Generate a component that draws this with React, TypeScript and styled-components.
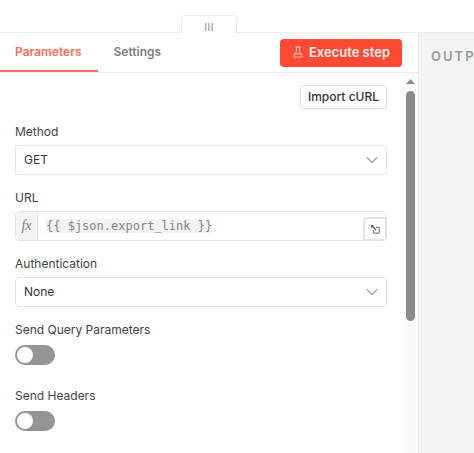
import React, { useState } from "react";
import styled, { createGlobalStyle } from "styled-components";

const accent = "#ff6f5c";
const line = "#e4e4e4";
const text = "#444444";

const GlobalStyle = createGlobalStyle`
  *, *::before, *::after { box-sizing: border-box; }
  body {
    margin: 0;
    background: #fefefe;
    color: ${text};
    font-family: Inter, "Liberation Sans", sans-serif;
    font-size: 13px;
  }
  button, input, select { font: inherit; color: inherit; margin: 0; }
`;

const Page = styled.div`
  display: flex;
  min-height: 100vh;
`;

const NodePane = styled.main`
  flex: 1;
  min-width: 0;
  display: flex;
  flex-direction: column;
`;

const TopStrip = styled.div`
  height: 33px;
  border-bottom: 1px solid #ebebeb;
  display: flex;
  justify-content: center;
  align-items: flex-end;
`;

const DragHandle = styled.button`
  width: 56px;
  height: 18px;
  margin-bottom: -1px;
  padding: 5px 0 0;
  border: 1px solid #ebebeb;
  border-bottom: 0;
  border-radius: 4px 4px 0 0;
  background: #ffffff;
  display: flex;
  justify-content: center;
  align-items: center;
  cursor: ew-resize;
`;

const Panel = styled.section`
  flex: 1;
  display: flex;
  flex-direction: column;
`;

const Header = styled.header`
  height: 40px;
  padding-right: 16px;
  border-bottom: 1px solid #ebebeb;
  display: flex;
  justify-content: space-between;
  align-items: center;
`;

const Tabs = styled.div`
  display: flex;
  align-self: stretch;
  gap: 1px;
`;

const Tab = styled.button<{ $active: boolean }>`
  height: 39px;
  padding: 0 16px 0 15px;
  border: 0;
  border-bottom: 2px solid ${(p) => (p.$active ? accent : "transparent")};
  background: none;
  color: ${(p) => (p.$active ? accent : "#7e7e7e")};
  font-weight: 600;
  font-size: 12px;
  cursor: pointer;
`;

const ExecuteButton = styled.button`
  height: 28px;
  padding: 0 12px 1px 13px;
  border: 0;
  border-radius: 4px;
  background: #ff4a33;
  color: #fff1ef;
  font-weight: 600;
  display: flex;
  align-items: center;
  gap: 6px;
  white-space: nowrap;
  cursor: pointer;
`;

const Body = styled.div`
  flex: 1;
  display: flex;
`;

const Form = styled.form`
  flex: 1;
  min-width: 0;
  padding: 12px 16px 16px 15px;
  display: flex;
  flex-direction: column;
  gap: 15px;
`;

const ImportButton = styled.button`
  align-self: flex-end;
  height: 24px;
  padding: 0 7px 1px;
  border: 1px solid ${line};
  border-radius: 4px;
  background: #ffffff;
  color: #333333;
  font-size: 12px;
  font-weight: 500;
  box-shadow: 0 1px 2px rgba(0, 0, 0, 0.05);
  cursor: pointer;
`;

const Field = styled.div<{ $switch?: boolean }>`
  display: grid;
  grid-template-rows: 16px ${(p) => (p.$switch ? "28px" : "30px")};
  row-gap: ${(p) => (p.$switch ? "7px" : "5px")};
`;

const Label = styled.label`
  justify-self: start;
  font-size: 12px;
  line-height: 16px;
`;

const SelectBox = styled.div`
  position: relative;
  display: grid;

  svg {
    position: absolute;
    right: 9px;
    top: 11px;
    pointer-events: none;
  }
`;

const Select = styled.select`
  appearance: none;
  width: 100%;
  height: 30px;
  padding: 0 32px 1px 8px;
  border: 1px solid ${line};
  border-radius: 4px;
  background: #ffffff;
  color: #383838;
  font-size: 12px;
`;

const ExpressionBox = styled.div`
  position: relative;
  display: flex;
  align-items: center;
  border: 1px solid ${line};
  border-radius: 4px;
  background: #ffffff;
  overflow: hidden;
`;

const FxBadge = styled.span`
  align-self: stretch;
  width: 22px;
  border-right: 1px solid ${line};
  background: #f4f4f4;
  color: #777c85;
  font: italic 14px/27px "Liberation Serif", serif;
  text-align: center;
`;

const ExpressionInput = styled.input`
  width: 23ch;
  height: 14px;
  margin-left: 8px;
  padding: 0;
  border: 0;
  box-sizing: content-box;
  background: #f3f3f3;
  color: #858585;
  && { font: 12px/14px "DejaVu Sans Mono", monospace; }
`;

const ExpandButton = styled.button`
  position: absolute;
  right: -1px;
  bottom: -1px;
  width: 24px;
  height: 24px;
  padding: 0;
  border: 2px solid ${line};
  border-radius: 4px 0 0 0;
  background: #ffffff;
  display: flex;
  justify-content: center;
  align-items: center;
  cursor: pointer;
`;

const Switch = styled.input`
  appearance: none;
  width: 40px;
  height: 20px;
  padding: 2px;
  border-radius: 10px;
  background: #949494;
  cursor: pointer;

  &::before {
    content: "";
    display: block;
    width: 16px;
    height: 16px;
    border-radius: 50%;
    background: #ffffff;
  }
  &:checked { background: ${accent}; }
  &:checked::before { margin-left: auto; }
`;

const ScrollTrack = styled.div`
  width: 15px;
  padding-top: 6px;
  background: #fbfbfb;
  display: flex;
  flex-direction: column;
  align-items: center;
  gap: 7px;
`;

const ScrollThumb = styled.div`
  width: 9px;
  height: 230px;
  border-radius: 5px;
  background: #8b8b8b;
`;

const OutputPane = styled.aside`
  flex: 0 0 56px;
  display: flex;
  flex-direction: column;
  overflow: hidden;
`;

const OutputSpacer = styled.div`
  height: 33px;
  border-bottom: 1px solid #ebebeb;
`;

const OutputBody = styled.div`
  flex: 1;
  padding: 14px 0 0 12px;
  background: #f4f4f4;
  border-left: 1px solid #e8e8e8;
`;

const OutputTitle = styled.h2`
  margin: 0;
  color: #999999;
  font-size: 13px;
  line-height: 18px;
  font-weight: 600;
  letter-spacing: 2px;
`;

const Chevron = () => (
  <svg width="12" height="8" viewBox="0 0 12 8" fill="none" stroke="#9a9a9a" strokeWidth="1.1" aria-hidden="true">
    <path d="M1 1.5 6 6.5 11 1.5" />
  </svg>
);

const Flask = () => (
  <svg width="10" height="12" viewBox="0 0 10 12" fill="none" stroke="#ffd0c9" strokeWidth="1" strokeLinejoin="round" strokeLinecap="round" aria-hidden="true">
    <path d="M2.900 1h4.200M3.500 1v4L.9 9.600c-.4.800 0 1.600.8 1.600h6.600c.8 0 1.200-.8.8-1.600L6.500 5V1M2.500 7.800h5" />
  </svg>
);

const Grip = () => (
  <svg width="8" height="8" viewBox="0 0 8 8" fill="#b0b0b0" aria-hidden="true">
    <path d="M0 0h1.500v8H0zM3.200 0h1.500v8H3.200zM6.500 0H8v8H6.500z" />
  </svg>
);

const Expand = () => (
  <svg width="9" height="9" viewBox="0 0 9 9" fill="none" stroke="#808080" strokeWidth="1.2" aria-hidden="true">
    <path d="M5 2.400H7.500Q8.200 2.400 8.200 3.100V7.500Q8.200 8.200 7.500 8.200H3.100Q2.400 8.200 2.400 7.500V5" />
    <path d="M1 1 5 5" stroke="#555555" />
    <path d="M0 0h3L0 3z" fill="#555555" stroke="none" />
  </svg>
);

const ArrowUp = () => (
  <svg width="9" height="5" viewBox="0 0 9 5" fill="#8b8b8b" aria-hidden="true">
    <path d="M4.500 0 9 5H0z" />
  </svg>
);

function SelectField({ id, label, options }: { id: string; label: string; options: string[] }) {
  return (
    <Field>
      <Label htmlFor={id}>{label}</Label>
      <SelectBox>
        <Select id={id} defaultValue={options[0]}>
          {options.map((o) => (
            <option key={o}>{o}</option>
          ))}
        </Select>
        <Chevron />
      </SelectBox>
    </Field>
  );
}

function SwitchField({ id, label }: { id: string; label: string }) {
  return (
    <Field $switch>
      <Label htmlFor={id}>{label}</Label>
      <Switch id={id} type="checkbox" role="switch" />
    </Field>
  );
}

export default function App() {
  const [tab, setTab] = useState("Parameters");
  const [url, setUrl] = useState("{{ $json.export_link }}");

  return (
    <>
      <GlobalStyle />
      <Page>
        <NodePane>
          <TopStrip>
            <DragHandle type="button" aria-label="Resize panel">
              <Grip />
            </DragHandle>
          </TopStrip>
          <Panel>
            <Header>
              <Tabs role="tablist">
                {["Parameters", "Settings"].map((name) => (
                  <Tab key={name} type="button" role="tab" aria-selected={tab === name} $active={tab === name} onClick={() => setTab(name)}>
                    {name}
                  </Tab>
                ))}
              </Tabs>
              <ExecuteButton type="button">
                <Flask />
                Execute step
              </ExecuteButton>
            </Header>
            <Body>
              <Form>
                <ImportButton type="button">Import cURL</ImportButton>
                <SelectField id="method" label="Method" options={["GET", "POST", "PUT", "DELETE"]} />
                <Field>
                  <Label htmlFor="url">URL</Label>
                  <ExpressionBox>
                    <FxBadge>fx</FxBadge>
                    <ExpressionInput id="url" spellCheck={false} value={url} onChange={(e) => setUrl(e.target.value)} />
                    <ExpandButton type="button" aria-label="Open expression editor">
                      <Expand />
                    </ExpandButton>
                  </ExpressionBox>
                </Field>
                <SelectField id="auth" label="Authentication" options={["None", "Predefined Credential Type", "Generic Credential Type"]} />
                <SwitchField id="query" label="Send Query Parameters" />
                <SwitchField id="headers" label="Send Headers" />
              </Form>
              <ScrollTrack>
                <ArrowUp />
                <ScrollThumb />
              </ScrollTrack>
            </Body>
          </Panel>
        </NodePane>
        <OutputPane>
          <OutputSpacer />
          <OutputBody>
            <OutputTitle>OUTPUT</OutputTitle>
          </OutputBody>
        </OutputPane>
      </Page>
    </>
  );
}
